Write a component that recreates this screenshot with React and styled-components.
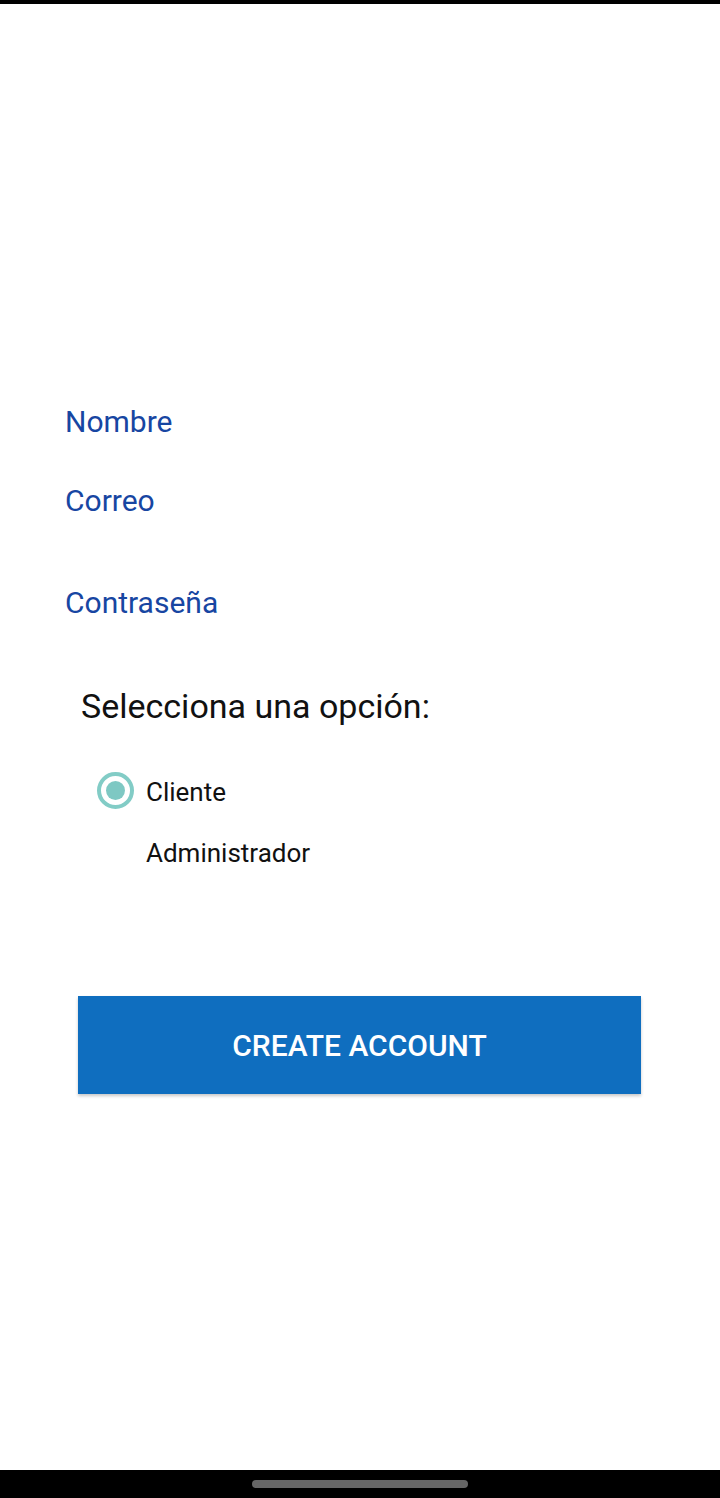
import React, { useState } from "react";
import styled, { createGlobalStyle } from "styled-components";

const Global = createGlobalStyle`
  html, body { margin: 0; padding: 0; background: #ffffff; }
  body { font-family: Roboto, "Noto Sans", "Liberation Sans", sans-serif; }
  * { box-sizing: border-box; }
`;

const Screen = styled.div`
  width: 720px;
  height: 1498px;
  display: flex;
  flex-direction: column;
  background: #ffffff;
  overflow: hidden;
`;

const StatusStrip = styled.div`
  height: 4px;
  flex: none;
  background: #000000;
`;

const Main = styled.main`
  flex: 1;
  display: flex;
  flex-direction: column;
  padding-top: 400px;
`;

const Form = styled.div`
  display: flex;
  flex-direction: column;
  padding-left: 65px;
`;

const HintField = styled.div`
  margin-top: ${(p) => p.$gap}px;
  height: 36px;
  font-size: 30px;
  line-height: 36px;
  color: #1746a2;
  white-space: nowrap;
`;

const Heading = styled.div`
  margin: 65px 0 0 81px;
  height: 40px;
  font-size: 34px;
  line-height: 40px;
  color: #111111;
`;

const RadioGroup = styled.div`
  display: flex;
  flex-direction: column;
  gap: 31px;
  margin-top: 51px;
  padding-left: 97px;
`;

const RadioRow = styled.label`
  display: flex;
  align-items: center;
  gap: 12px;
  height: 30px;
  cursor: pointer;
`;

const RadioMark = styled.span`
  width: 37px;
  height: 37px;
  flex: none;
  border-radius: 50%;
  border: 4px solid ${(p) => (p.$on ? "#82ccc6" : "transparent")};
  display: flex;
  align-items: center;
  justify-content: center;
  margin-top: -3px;
  &::after {
    content: "";
    width: 19px;
    height: 19px;
    border-radius: 50%;
    background: ${(p) => (p.$on ? "#7ec8c3" : "transparent")};
  }
`;

const RadioText = styled.span`
  font-size: 26px;
  line-height: 30px;
  color: #111111;
`;

const PrimaryButton = styled.button`
  margin: 128px 0 0 78px;
  width: 563px;
  height: 98px;
  border: none;
  border-radius: 0;
  background: #0f6ebf;
  color: #ffffff;
  font-family: Roboto, "Noto Sans", sans-serif;
  font-weight: 500;
  font-size: 30px;
  letter-spacing: 0;
  text-transform: uppercase;
  box-shadow: 0 2px 3px rgba(0, 0, 0, 0.22);
  cursor: pointer;
`;

const NavBar = styled.div`
  height: 28px;
  flex: none;
  background: #000000;
  display: flex;
  justify-content: center;
  align-items: flex-start;
  padding-top: 10px;
`;

const Handle = styled.div`
  width: 216px;
  height: 8px;
  border-radius: 4px;
  background: #666666;
`;

export default function App() {
  const [role, setRole] = useState("cliente");
  const options = [
    { id: "cliente", label: "Cliente" },
    { id: "admin", label: "Administrador" },
  ];
  return (
    <>
      <Global />
      <Screen>
        <StatusStrip />
        <Main>
          <Form>
            <HintField $gap={0}>Nombre</HintField>
            <HintField $gap={43}>Correo</HintField>
            <HintField $gap={66}>Contraseña</HintField>
          </Form>
          <Heading>Selecciona una opción:</Heading>
          <RadioGroup>
            {options.map((o) => (
              <RadioRow key={o.id} onClick={() => setRole(o.id)}>
                <RadioMark $on={role === o.id} />
                <RadioText>{o.label}</RadioText>
              </RadioRow>
            ))}
          </RadioGroup>
          <PrimaryButton>Create Account</PrimaryButton>
        </Main>
        <NavBar>
          <Handle />
        </NavBar>
      </Screen>
    </>
  );
}
